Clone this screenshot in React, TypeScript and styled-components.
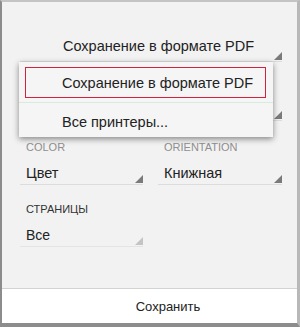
import React from 'react';
import styled, { createGlobalStyle } from 'styled-components';

const GlobalStyle = createGlobalStyle`
  html, body {
    margin: 0;
    padding: 0;
    background: #ffffff;
  }
  body {
    font-family: "Liberation Sans", Arial, sans-serif;
    color: #222222;
  }
`;

const Frame = styled.div`
  position: relative;
  width: 300px;
  height: 327px;
  box-sizing: border-box;
  border-left: 2px solid #8c8c8c;
  border-top: 2px solid #c4c4c4;
  border-right: 3px solid #b8b8b8;
  border-bottom: 4px solid #8c8c8c;
  background: #f2f2f2;
  display: flex;
  flex-direction: column;
`;

const Main = styled.div`
  flex: 1;
  padding: 0 15px 0 18px;
  display: flex;
  flex-direction: column;
`;

const SelectBox = styled.div<{ $top?: number; $height: number; $indent?: number; $half?: boolean; $faded?: boolean }>`
  margin-top: ${(p) => p.$top ?? 0}px;
  height: ${(p) => p.$height}px;
  width: ${(p) => (p.$half ? '123px' : 'auto')};
  box-sizing: border-box;
  border-bottom: 1px solid ${(p) => (p.$faded ? '#e4e4e4' : '#dcdcdc')};
  padding: 0 0 1px ${(p) => p.$indent ?? 6}px;
  display: flex;
  align-items: flex-end;
  justify-content: space-between;
`;

const SelectText = styled.span<{ $size?: number; $lift?: number }>`
  font-size: ${(p) => p.$size ?? 14.5}px;
  line-height: 20px;
  padding-bottom: ${(p) => p.$lift ?? 0}px;
  white-space: nowrap;
`;

const Corner = ({ color }: { color: string }) => (
  <svg width="8" height="8" viewBox="0 0 8 8">
    <polygon points="8,0 8,8 0,8" fill={color} />
  </svg>
);

const Grid = styled.div`
  display: grid;
  grid-template-columns: 123px 124px;
  column-gap: 15px;
`;

const Field = styled.div`
  display: flex;
  flex-direction: column;
`;

const Label = styled.div<{ $dark?: boolean; $top: number }>`
  margin-top: ${(p) => p.$top}px;
  padding-left: 6px;
  font-size: 11px;
  line-height: 14px;
  text-transform: uppercase;
  color: ${(p) => (p.$dark ? '#333333' : '#8f8f8f')};
`;

const Menu = styled.div`
  position: absolute;
  left: 17px;
  top: 60px;
  width: 254px;
  height: 75px;
  box-sizing: border-box;
  background: #f5f5f5;
  box-shadow: 0 2px 6px rgba(0, 0, 0, 0.45);
  padding: 5px 7px 0 6px;
  display: flex;
  flex-direction: column;
`;

const MenuItem = styled.div<{ $active?: boolean }>`
  height: ${(p) => (p.$active ? 31 : 34)}px;
  box-sizing: border-box;
  border: ${(p) => (p.$active ? '1px solid #d4213d' : 'none')};
  display: flex;
  align-items: center;
  padding-top: ${(p) => (p.$active ? 0 : 3)}px;
  padding-left: ${(p) => (p.$active ? 36 : 37)}px;
  font-size: 14.5px;
  white-space: nowrap;
`;

const MenuSeparator = styled.div`
  height: 1px;
  margin: 4px -7px 0 -6px;
  background: #d4ecdc;
`;

const Footer = styled.div`
  height: 35px;
  box-sizing: border-box;
  border-top: 1px solid #d2d2d2;
  background: #ffffff;
  display: flex;
  align-items: center;
  justify-content: center;
  padding-left: 37px;
  font-size: 13px;
  color: #222222;
`;

export default function App() {
  return (
    <>
      <GlobalStyle />
      <Frame>
        <Main>
          <SelectBox $top={28} $height={32} $indent={43}>
            <SelectText $lift={4}>Сохранение в формате PDF</SelectText>
            <Corner color="#7a7a7a" />
          </SelectBox>
          <SelectBox $height={59}>
            <span />
            <Corner color="#7a7a7a" />
          </SelectBox>
          <Grid>
            <Field>
              <Label $top={19}>Color</Label>
              <SelectBox $height={31}>
                <SelectText>Цвет</SelectText>
                <Corner color="#7a7a7a" />
              </SelectBox>
            </Field>
            <Field>
              <Label $top={19}>Orientation</Label>
              <SelectBox $height={31}>
                <SelectText>Книжная</SelectText>
                <Corner color="#7a7a7a" />
              </SelectBox>
            </Field>
          </Grid>
          <Label $dark $top={17}>Страницы</Label>
          <SelectBox $height={31} $half $faded>
            <SelectText $size={14}>Все</SelectText>
            <Corner color="#c4c4c4" />
          </SelectBox>
        </Main>
        <Footer>Сохранить</Footer>
        <Menu>
          <MenuItem $active>Сохранение в формате PDF</MenuItem>
          <MenuSeparator />
          <MenuItem>Все принтеры...</MenuItem>
        </Menu>
      </Frame>
    </>
  );
}
